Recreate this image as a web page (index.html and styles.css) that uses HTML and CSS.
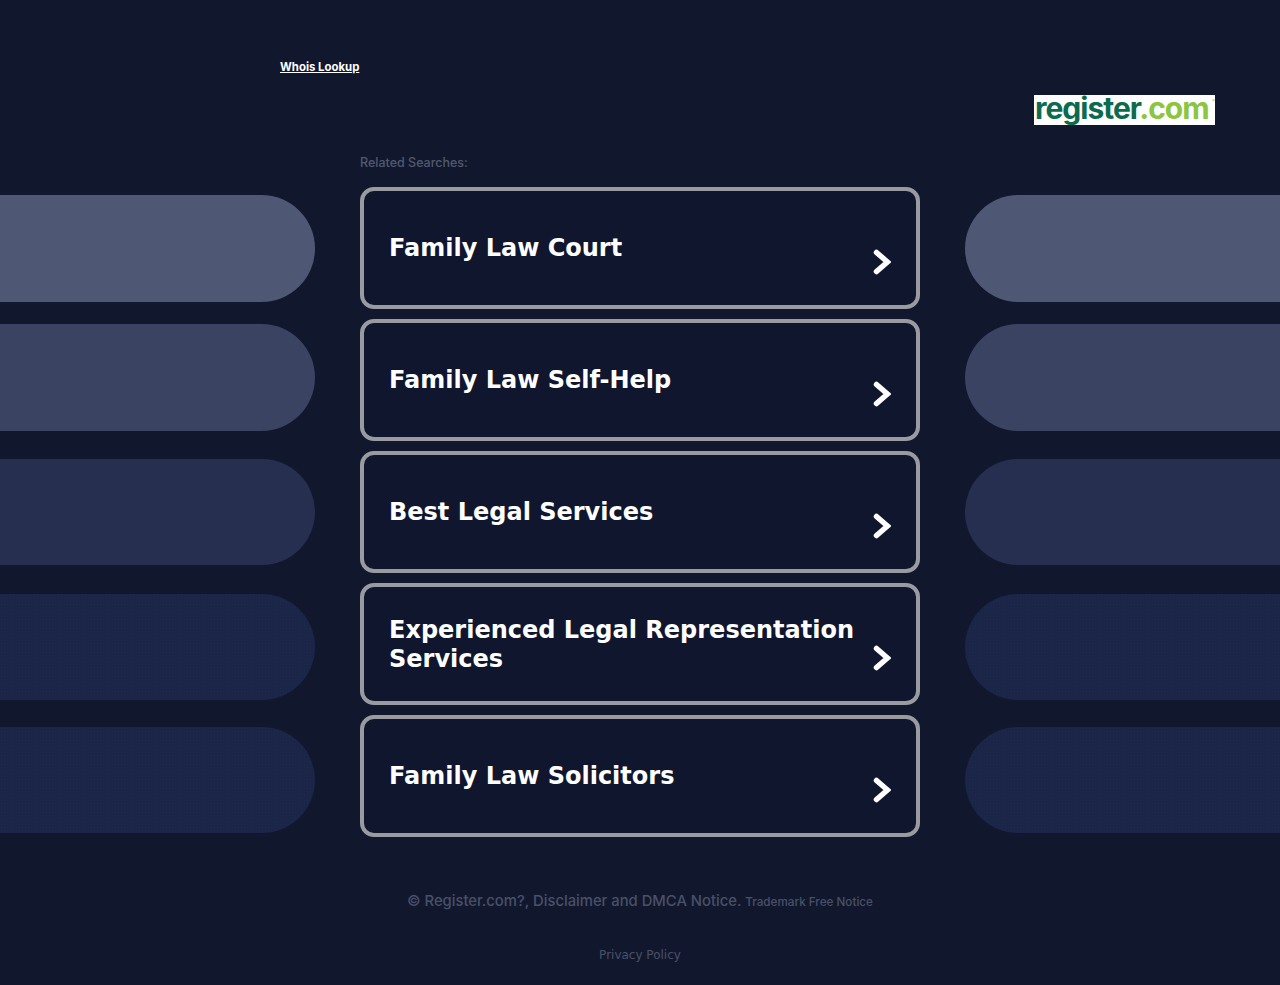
FILE: index.html
```html
<!DOCTYPE html>
<html>

<head>
    <title>register.com</title>
    <link rel="stylesheet" href="styles.css">
</head>

<body>
    <!-- Top row -->
    <div class="whois-row">
        <a class="whois-link" href="#">Whois Lookup</a>
    </div>

    <div class="logo-row">
        <div class="logo"><span class="logo-dark">register</span><span class="logo-light">.com</span><span class="logo-mark">®</span></div>
    </div>

    <!-- Pills and related searches -->
    <div class="main">
        <div class="side side-left">
            <div class="pill pill-1"></div>
            <div class="pill pill-2"></div>
            <div class="pill pill-3"></div>
            <div class="pill pill-4"></div>
            <div class="pill pill-5"></div>
        </div>

        <div class="center">
            <h2 class="related">Related Searches:</h2>
            <a class="card" href="#">
                <span class="card-title">Family Law Court</span>
                <svg class="chevron" viewBox="0 0 18 26"><path d="M3.5 3.5 L14.5 13 L3.5 22.5" /></svg>
            </a>
            <a class="card" href="#">
                <span class="card-title">Family Law Self-Help</span>
                <svg class="chevron" viewBox="0 0 18 26"><path d="M3.5 3.5 L14.5 13 L3.5 22.5" /></svg>
            </a>
            <a class="card" href="#">
                <span class="card-title">Best Legal Services</span>
                <svg class="chevron" viewBox="0 0 18 26"><path d="M3.5 3.5 L14.5 13 L3.5 22.5" /></svg>
            </a>
            <a class="card" href="#">
                <span class="card-title card-title-long">Experienced Legal Representation Services</span>
                <svg class="chevron" viewBox="0 0 18 26"><path d="M3.5 3.5 L14.5 13 L3.5 22.5" /></svg>
            </a>
            <a class="card" href="#">
                <span class="card-title">Family Law Solicitors</span>
                <svg class="chevron" viewBox="0 0 18 26"><path d="M3.5 3.5 L14.5 13 L3.5 22.5" /></svg>
            </a>
        </div>

        <div class="side side-right">
            <div class="pill pill-1"></div>
            <div class="pill pill-2"></div>
            <div class="pill pill-3"></div>
            <div class="pill pill-4"></div>
            <div class="pill pill-5"></div>
        </div>
    </div>

    <!-- Footer -->
    <footer>
        <p class="notice">© Register.com?, Disclaimer and DMCA Notice. <span class="trademark">Trademark Free Notice</span></p>
        <a class="privacy" href="#">Privacy Policy</a>
    </footer>
</body>

</html>
```

FILE: styles.css
```css
/* General styles */
body {
    margin: 0;
    height: 985px;
    overflow: hidden;
    background-color: #11182d;
    font-family: "Inter", sans-serif;
}

a {
    color: inherit;
    text-decoration: none;
}

/* Whois link */
.whois-row {
    height: 60px;
    padding: 58px 0 0 280px;
    box-sizing: border-box;
    line-height: 14px;
}

.whois-link {
    color: #fff;
    font-size: 11.4px;
    font-weight: 700;
    text-decoration: underline;
}

/* Logo */
.logo-row {
    display: flex;
    justify-content: flex-end;
    padding: 35px 65px 0 0;
}

.logo {
    width: 181px;
    height: 30px;
    box-sizing: border-box;
    padding-left: 1px;
    background: #fff;
    position: relative;
    font-family: "Inter", sans-serif;
    font-size: 30px;
    font-weight: 700;
    line-height: 26px;
    letter-spacing: -1px;
    white-space: nowrap;
}

.logo-dark {
    color: #0c6b4f;
}

.logo-light {
    color: #8cc540;
}

.logo-mark {
    position: absolute;
    top: 3px;
    right: 0;
    font-size: 4px;
    line-height: 5px;
    letter-spacing: 0;
    color: #8cc540;
}

/* Three columns */
.main {
    display: flex;
    gap: 45px;
}

.side {
    width: 315px;
    display: flex;
    flex-direction: column;
    padding-top: 70px;
}

.pill {
    height: 106px;
}

.side-left .pill {
    border-radius: 0 54px 54px 0;
}

.side-right .pill {
    border-radius: 54px 0 0 54px;
}

.pill-1 {
    height: 107px;
    background-color: #4e5874;
}

.pill-2 {
    height: 107px;
    margin-top: 22px;
    background-color: #3a4462;
}

.pill-3 {
    margin-top: 28px;
    background-color: #272f50;
}

/* The two darkest pills have a faint dotted grain */
.pill-4,
.pill-5 {
    background-color: #1a2548;
    background-image: radial-gradient(rgba(255, 255, 255, 0.02) 0.7px, transparent 0.8px);
    background-size: 3px 3px;
}

.pill-4 {
    margin-top: 29px;
}

.pill-5 {
    margin-top: 27px;
}

/* Related searches */
.center {
    width: 560px;
}

.related {
    margin: 0;
    height: 62px;
    padding-top: 30px;
    box-sizing: border-box;
    color: #525871;
    font-size: 12.5px;
    font-weight: 500;
    line-height: 15px;
}

.card {
    display: flex;
    align-items: center;
    justify-content: space-between;
    height: 122px;
    box-sizing: border-box;
    margin-bottom: 10px;
    padding: 0 25px;
    border: 4px solid #9a9ba1;
    border-radius: 14px;
    background-color: #10162d;
    color: #fff;
}

.card-title {
    width: 470px;
    font-family: "DejaVu Sans", sans-serif;
    font-size: 24px;
    font-weight: 700;
    line-height: 29px;
}

.card-title-long {
    margin-top: 2px;
}

.chevron {
    width: 18px;
    height: 26px;
    margin-top: 28px;
    flex-shrink: 0;
    fill: none;
    stroke: #fff;
    stroke-width: 5.5;
    stroke-linecap: round;
    stroke-linejoin: miter;
}

/* Footer */
footer {
    padding-top: 44px;
    text-align: center;
    color: #4a5069;
}

.notice {
    margin: 0;
    font-size: 14.8px;
    font-weight: 500;
    line-height: 20px;
}

.trademark {
    font-size: 11.7px;
    font-weight: 500;
}

.privacy {
    display: block;
    margin-top: 35px;
    font-family: "DejaVu Sans", sans-serif;
    font-size: 12px;
    line-height: 16px;
}
```
